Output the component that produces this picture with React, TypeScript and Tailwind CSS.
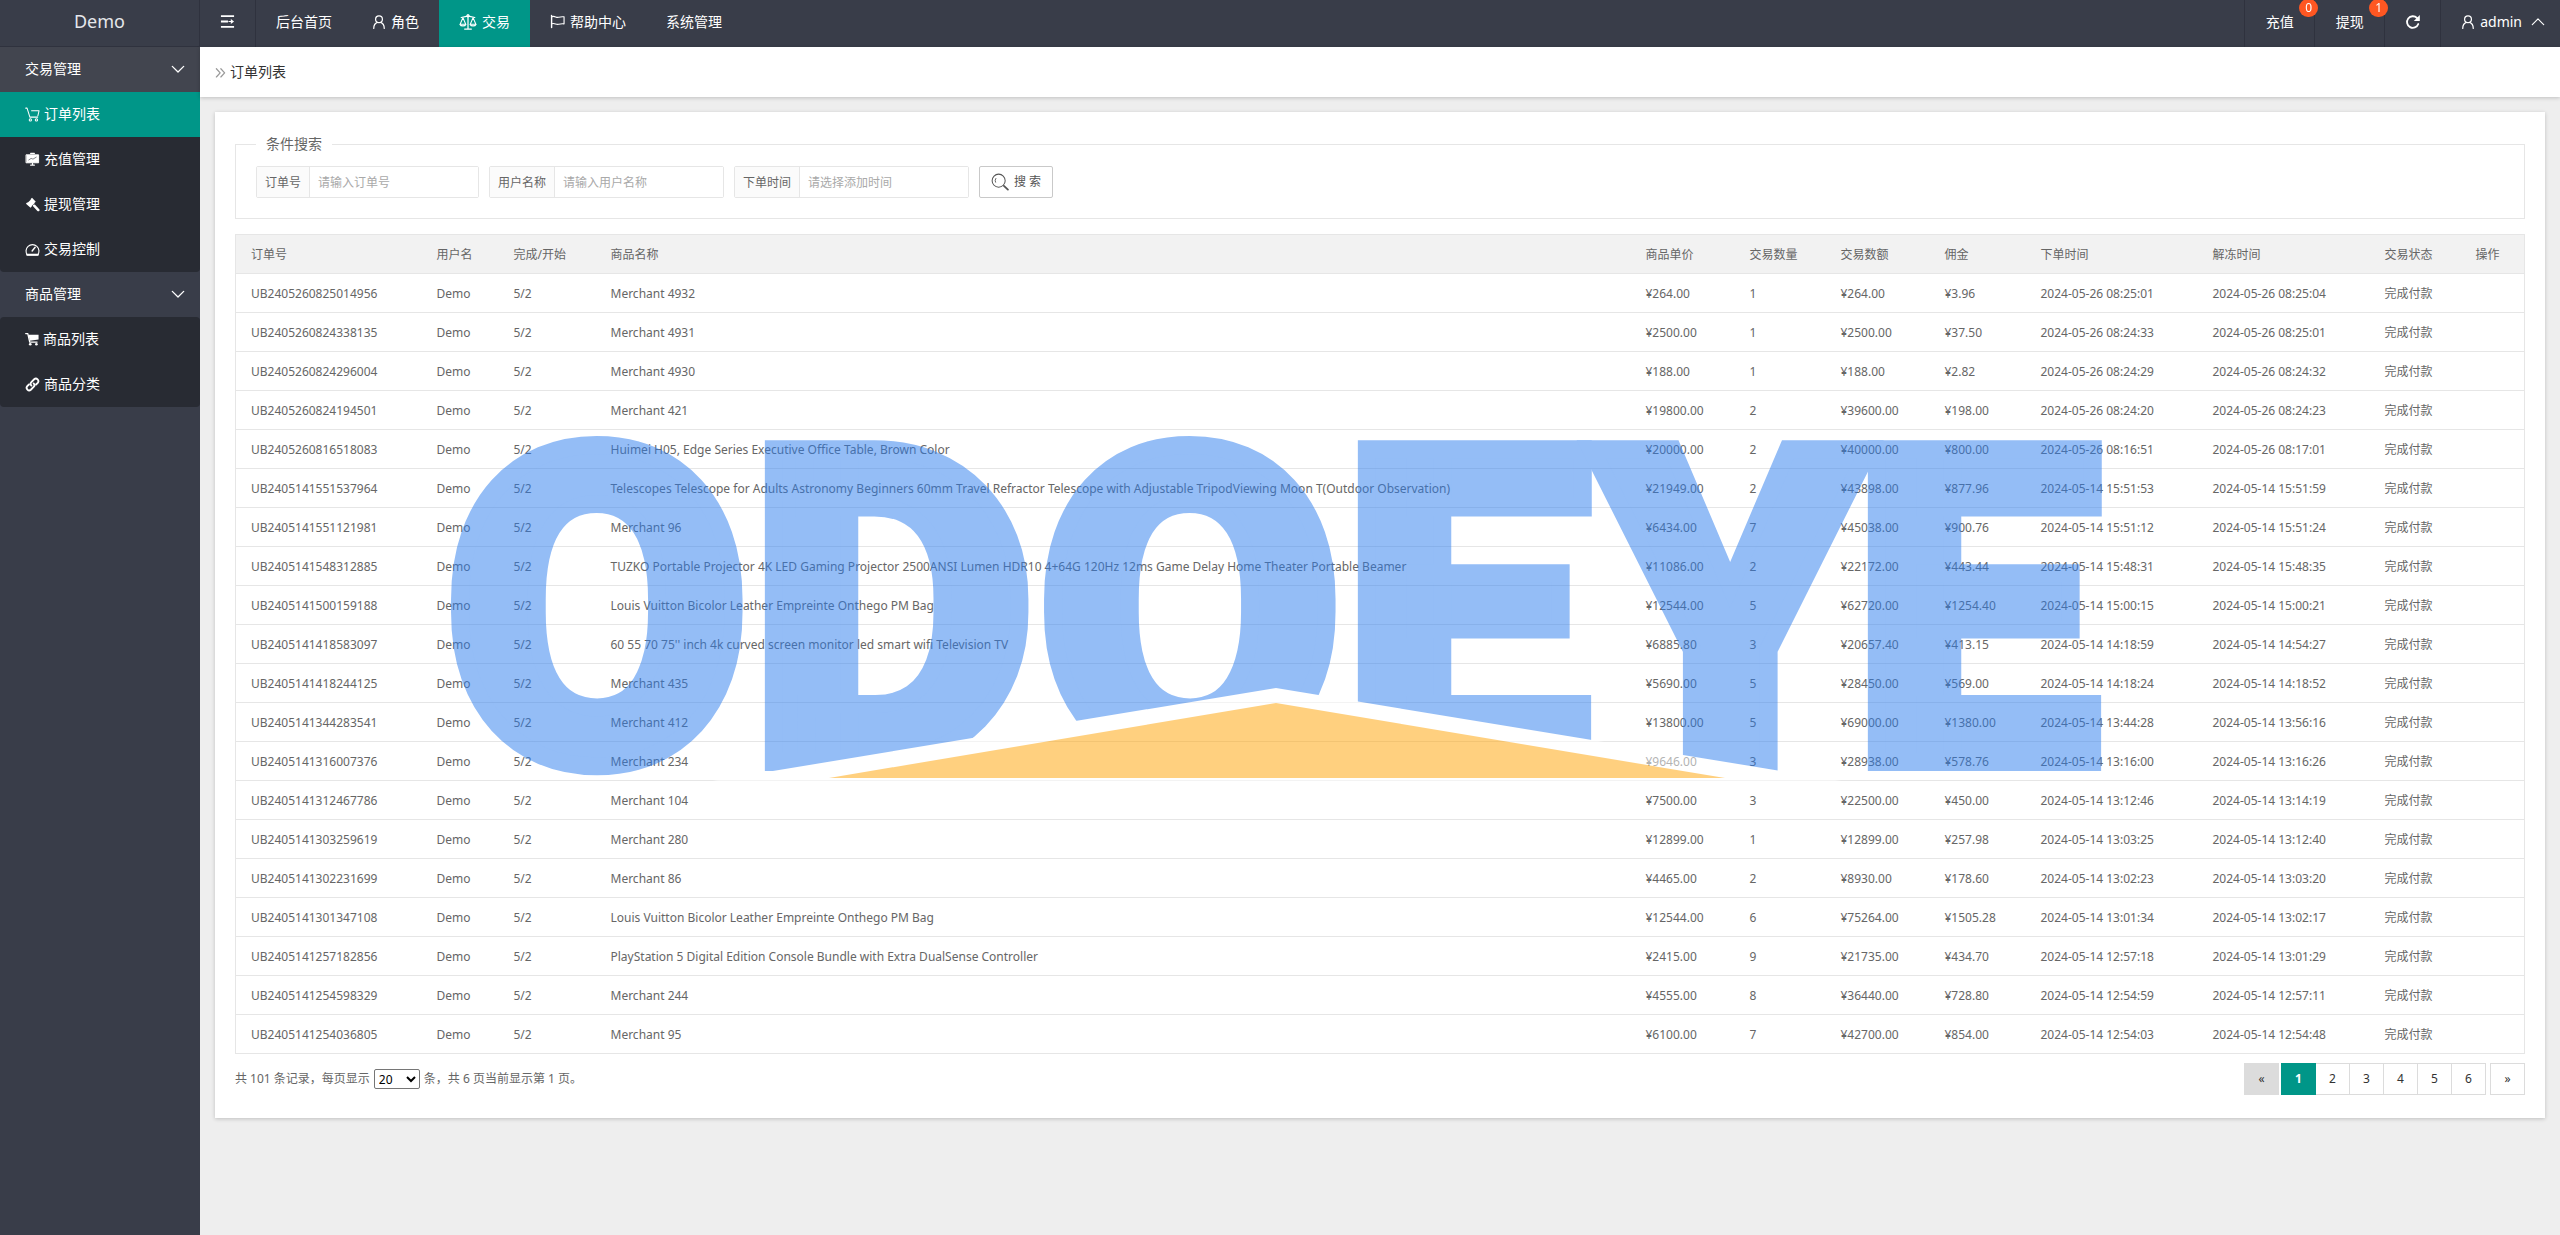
import { useState, type ReactNode } from "react";

function Icon({ size = 16, children }: { size?: number; children: ReactNode }) {
  return (
    <svg
      width={size}
      height={size}
      viewBox="0 0 16 16"
      fill="none"
      stroke="currentColor"
      strokeLinecap="round"
      strokeLinejoin="round"
      aria-hidden="true"
      className="shrink-0"
    >
      {children}
    </svg>
  );
}

const Shrink = () => (
  <Icon size={15}>
    <path d="M1 2.200h14M1 13.800h14M1 8h7.500" strokeWidth="1.900" strokeLinecap="butt" />
    <path d="M9.500 8h3" strokeWidth="1.200" />
    <path d="M11.500 5.300L15 8l-3.500 2.700z" fill="currentColor" stroke="none" />
  </Icon>
);

const Person = () => (
  <Icon size={14}>
    <circle cx="8" cy="4.800" r="3.900" strokeWidth="1.400" />
    <path d="M2 15.400c0-3.600 1.800-6.200 4.200-7M14 15.400c0-3.600-1.800-6.200-4.200-7" strokeWidth="1.400" />
  </Icon>
);

const Scales = () => (
  <Icon size={18}>
    <path d="M8 1.500v12.500M5 14.300h6M2 4l4.500-1h3L14 4" strokeWidth="1.100" />
    <path d="M3.500 4.200L1 10h5L3.500 4.200zM12.500 4.200L10 10h5l-2.500-5.800z" strokeWidth="0.900" />
    <path d="M1 10.200c.6 1.700 4.400 1.700 5 0M10 10.200c.6 1.700 4.400 1.700 5 0" strokeWidth="1.100" />
    <circle cx="8" cy="2.500" r="1" strokeWidth="1" />
  </Icon>
);

const Flag = () => (
  <Icon size={15}>
    <path d="M1.700 1.500v13" strokeWidth="1.500" />
    <path d="M2 3c3-1.600 4.500 1.300 7 .5 1.800-.5 3-.9 6-.5v7.500c-3-.4-4.200 0-6 .5-2.500.8-4-1.900-7-.5" strokeWidth="1.200" />
  </Icon>
);

const Reload = () => (
  <Icon size={16}>
    <path d="M13.300 10A5.800 5.800 0 1 1 12 4" strokeWidth="1.800" />
    <path d="M14.800 1v6H8.800z" fill="currentColor" stroke="none" />
  </Icon>
);

const CartLine = () => (
  <Icon size={15}>
    <path d="M.8 1.200h1.400l3 9.600h8.300" strokeWidth="1.100" />
    <path d="M7 4h8l-1.300 5.500" strokeWidth="1.100" />
    <circle cx="5.700" cy="13.800" r="1.200" strokeWidth="1.100" />
    <circle cx="12.200" cy="13.800" r="1.200" strokeWidth="1.100" />
  </Icon>
);

const Board = () => (
  <Icon size={15}>
    <path d="M1.500 3h13v8.500h-13z" fill="currentColor" strokeWidth="1" />
    <path d="M6 1.500h4M6 14h4M8 12v2" strokeWidth="1.200" />
    <path d="M4 8.500l2.500-1.700 2 .8L12 5.500" stroke="#282b33" strokeWidth="0.600" />
  </Icon>
);

const Gavel = () => (
  <Icon size={15}>
    <path d="M7.500.8l4 4.200-1.300 1.200 0 .4-3 3v.600l-1.300 1.300L1 7.200l1.200-1.300h.9l3-3V2z" fill="currentColor" stroke="none" />
    <path d="M9.800 9.300l4.400 4.600" strokeWidth="2.700" />
  </Icon>
);

const Gauge = () => (
  <Icon size={15}>
    <path d="M2.600 14a6.900 6.900 0 1 1 10.800 0z" strokeWidth="1.200" />
    <path d="M2.200 13.500h11.600" strokeWidth="2" />
    <path d="M7.600 9.600l3.200-4" strokeWidth="1.500" />
  </Icon>
);

const CartSolid = () => (
  <Icon size={14}>
    <path d="M4 3h11.500v5.500L5.500 10z" fill="currentColor" stroke="none" />
    <path d="M.8 1.800h2.400l2.200 9.700h8.400" strokeWidth="1.500" />
    <circle cx="6" cy="14" r="1.500" fill="currentColor" stroke="none" />
    <circle cx="13" cy="14" r="1.500" fill="currentColor" stroke="none" />
  </Icon>
);

const Chain = () => (
  <Icon size={15}>
    <path d="M6.800 9.200a2.700 2.700 0 0 1 0-3.800l3-3a2.700 2.700 0 0 1 3.800 3.800l-1.800 1.800" strokeWidth="2" />
    <path d="M9.200 6.800a2.700 2.700 0 0 1 0 3.800l-3 3a2.700 2.700 0 0 1-3.800-3.800l1.800-1.800" strokeWidth="2" />
  </Icon>
);

const Search = () => (
  <Icon size={18}>
    <circle cx="6.800" cy="6.800" r="5.800" strokeWidth="0.900" />
    <path d="M11.500 11.500l3.500 3.300" strokeWidth="1.600" />
    <path d="M4 8.200a3.200 3.200 0 0 1 .3-3.400" strokeWidth="0.800" />
  </Icon>
);

const DoubleChevron = () => (
  <Icon size={11}>
    <path d="M2 2.500L7.500 8.500 2 14.500M8.500 2.500L14 8.500 8.500 14.500" strokeWidth="1.800" />
  </Icon>
);

const ChevronDown = () => (
  <Icon size={14}>
    <path d="M1.500 5L8 11.500 14.500 5" strokeWidth="1.500" />
  </Icon>
);

const ChevronUp = () => (
  <Icon size={14}>
    <path d="M1.500 11L8 4.500 14.500 11" strokeWidth="1.300" />
  </Icon>
);

const topNav: { label: string; icon?: ReactNode; active?: boolean }[] = [
  { label: "后台首页" },
  { label: "角色", icon: <Person /> },
  { label: "交易", icon: <Scales />, active: true },
  { label: "帮助中心", icon: <Flag /> },
  { label: "系统管理" },
];

const sideNav: { title: string; open?: boolean; items: { label: string; icon: ReactNode; active?: boolean }[] }[] = [
  {
    title: "交易管理",
    open: true,
    items: [
      { label: "订单列表", icon: <CartLine />, active: true },
      { label: "充值管理", icon: <Board /> },
      { label: "提现管理", icon: <Gavel /> },
      { label: "交易控制", icon: <Gauge /> },
    ],
  },
  {
    title: "商品管理",
    items: [
      { label: "商品列表", icon: <CartSolid /> },
      { label: "商品分类", icon: <Chain /> },
    ],
  },
];

const columns: [string, string][] = [
  ["订单号", "w-[186px]"],
  ["用户名", "w-[77px]"],
  ["完成/开始", "w-[97px]"],
  ["商品名称", ""],
  ["商品单价", "w-[104px]"],
  ["交易数量", "w-[91px]"],
  ["交易数额", "w-[104px]"],
  ["佣金", "w-[96px]"],
  ["下单时间", "w-[172px]"],
  ["解冻时间", "w-[172px]"],
  ["交易状态", "w-[91px]"],
  ["操作", "w-16"],
];

const orders: string[][] = [
  ["UB2405260825014956", "Merchant 4932", "264.00", "1", "264.00", "3.96", "2024-05-26 08:25:01", "2024-05-26 08:25:04"],
  ["UB2405260824338135", "Merchant 4931", "2500.00", "1", "2500.00", "37.50", "2024-05-26 08:24:33", "2024-05-26 08:25:01"],
  ["UB2405260824296004", "Merchant 4930", "188.00", "1", "188.00", "2.82", "2024-05-26 08:24:29", "2024-05-26 08:24:32"],
  ["UB2405260824194501", "Merchant 421", "19800.00", "2", "39600.00", "198.00", "2024-05-26 08:24:20", "2024-05-26 08:24:23"],
  ["UB2405260816518083", "Huimei H05, Edge Series Executive Office Table, Brown Color", "20000.00", "2", "40000.00", "800.00", "2024-05-26 08:16:51", "2024-05-26 08:17:01"],
  ["UB2405141551537964", "Telescopes Telescope for Adults Astronomy Beginners 60mm Travel Refractor Telescope with Adjustable TripodViewing Moon T(Outdoor Observation)", "21949.00", "2", "43898.00", "877.96", "2024-05-14 15:51:53", "2024-05-14 15:51:59"],
  ["UB2405141551121981", "Merchant 96", "6434.00", "7", "45038.00", "900.76", "2024-05-14 15:51:12", "2024-05-14 15:51:24"],
  ["UB2405141548312885", "TUZKO Portable Projector 4K LED Gaming Projector 2500ANSI Lumen HDR10 4+64G 120Hz 12ms Game Delay Home Theater Portable Beamer", "11086.00", "2", "22172.00", "443.44", "2024-05-14 15:48:31", "2024-05-14 15:48:35"],
  ["UB2405141500159188", "Louis Vuitton Bicolor Leather Empreinte Onthego PM Bag", "12544.00", "5", "62720.00", "1254.40", "2024-05-14 15:00:15", "2024-05-14 15:00:21"],
  ["UB2405141418583097", "60 55 70 75'' inch 4k curved screen monitor led smart wifi Television TV", "6885.80", "3", "20657.40", "413.15", "2024-05-14 14:18:59", "2024-05-14 14:54:27"],
  ["UB2405141418244125", "Merchant 435", "5690.00", "5", "28450.00", "569.00", "2024-05-14 14:18:24", "2024-05-14 14:18:52"],
  ["UB2405141344283541", "Merchant 412", "13800.00", "5", "69000.00", "1380.00", "2024-05-14 13:44:28", "2024-05-14 13:56:16"],
  ["UB2405141316007376", "Merchant 234", "9646.00", "3", "28938.00", "578.76", "2024-05-14 13:16:00", "2024-05-14 13:16:26"],
  ["UB2405141312467786", "Merchant 104", "7500.00", "3", "22500.00", "450.00", "2024-05-14 13:12:46", "2024-05-14 13:14:19"],
  ["UB2405141303259619", "Merchant 280", "12899.00", "1", "12899.00", "257.98", "2024-05-14 13:03:25", "2024-05-14 13:12:40"],
  ["UB2405141302231699", "Merchant 86", "4465.00", "2", "8930.00", "178.60", "2024-05-14 13:02:23", "2024-05-14 13:03:20"],
  ["UB2405141301347108", "Louis Vuitton Bicolor Leather Empreinte Onthego PM Bag", "12544.00", "6", "75264.00", "1505.28", "2024-05-14 13:01:34", "2024-05-14 13:02:17"],
  ["UB2405141257182856", "PlayStation 5 Digital Edition Console Bundle with Extra DualSense Controller", "2415.00", "9", "21735.00", "434.70", "2024-05-14 12:57:18", "2024-05-14 13:01:29"],
  ["UB2405141254598329", "Merchant 244", "4555.00", "8", "36440.00", "728.80", "2024-05-14 12:54:59", "2024-05-14 12:57:11"],
  ["UB2405141254036805", "Merchant 95", "6100.00", "7", "42700.00", "854.00", "2024-05-14 12:54:03", "2024-05-14 12:54:48"],
];

const fields = [
  { id: "order", label: "订单号", hint: "请输入订单号" },
  { id: "user", label: "用户名称", hint: "请输入用户名称" },
  { id: "time", label: "下单时间", hint: "请选择添加时间" },
];

function Header() {
  return (
    <header className="flex h-[47px] bg-[#393d49] text-sm text-white">
      <a href="#" className="flex w-[200px] shrink-0 items-center justify-center border-r border-b border-[#2f323e] pb-1 text-lg text-gray-200">
        Demo
      </a>
      <button type="button" aria-label="收起菜单" className="flex w-14 items-center justify-center border-r border-[#2f323e] pb-1">
        <Shrink />
      </button>
      <nav className="flex">
        {topNav.map((n) => (
          <a
            key={n.label}
            href="#"
            className={n.active ? "flex items-center gap-[5px] bg-[#009688] px-5 pb-1" : "flex items-center gap-[5px] px-5 pb-1"}
          >
            {n.icon}
            {n.label}
          </a>
        ))}
      </nav>
      <div className="ml-auto flex">
        {[
          ["充值", "0"],
          ["提现", "1"],
        ].map(([label, count]) => (
          <a key={label} href="#" className="relative flex w-[70px] items-center justify-center border-l border-[#2f323e] pb-1">
            {label}
            <span className="absolute -top-px -right-1 z-10 flex h-[18px] w-[19px] items-center justify-center rounded-full bg-[#ff5722] text-xs">
              {count}
            </span>
          </a>
        ))}
        <button type="button" aria-label="刷新" className="flex w-14 items-center justify-center border-l border-[#2f323e] pb-1">
          <Reload />
        </button>
        <button type="button" className="flex items-center gap-[5px] border-l border-[#2f323e] pr-[15px] pl-5 pb-1">
          <Person />
          <span>admin</span>
          <span className="ml-1">
            <ChevronUp />
          </span>
        </button>
      </div>
    </header>
  );
}

function Sidebar() {
  return (
    <aside className="w-[200px] shrink-0 bg-[#393d49] text-sm text-white">
      {sideNav.map((g) => (
        <section key={g.title}>
          <button
            type="button"
            className={
              g.open
                ? "flex h-[45px] w-full items-center justify-between bg-[#42454f] pr-[15px] pb-px pl-[25px]"
                : "flex h-[45px] w-full items-center justify-between pr-[15px] pb-px pl-[25px]"
            }
          >
            {g.title}
            <ChevronDown />
          </button>
          <ul className="rounded-sm bg-[#282b33]">
            {g.items.map((i) => (
              <li key={i.label}>
                <a
                  href="#"
                  className={
                    i.active
                      ? "flex h-[45px] items-center gap-1 bg-[#009688] pb-px pl-[25px]"
                      : "flex h-[45px] items-center gap-1 pb-px pl-[25px]"
                  }
                >
                  {i.icon}
                  {i.label}
                </a>
              </li>
            ))}
          </ul>
        </section>
      ))}
    </aside>
  );
}

function Filters() {
  return (
    <fieldset className="h-[85px] border border-[#e6e6e6] px-5">
      <legend className="px-2.5 text-sm leading-5">条件搜索</legend>
      <form className="flex gap-2.5 pt-3" onSubmit={(e) => e.preventDefault()}>
        {fields.map((f) => (
          <div key={f.id} className="flex h-8 rounded-xs border border-[#e6e6e6]">
            <label htmlFor={f.id} className="flex items-center border-r border-[#e6e6e6] bg-[#fbfbfb] px-2 pt-px">
              {f.label}
            </label>
            <input
              id={f.id}
              type="text"
              placeholder={f.hint}
              className="w-[168px] bg-white px-2 pt-px outline-none placeholder:text-[#a9a9a9]"
            />
          </div>
        ))}
        <button type="submit" className="flex h-8 w-[74px] items-center justify-center gap-[5px] rounded-xs border border-[#c9c9c9] bg-white text-[#555]">
          <Search />
          <span>搜 索</span>
        </button>
      </form>
    </fieldset>
  );
}

function Orders() {
  return (
    <table className="mt-[15px] w-full table-fixed border-collapse border border-[#e6e6e6]">
      <thead>
        <tr className="h-[39px] border-b border-[#e6e6e6] bg-[#f2f2f2]">
          {columns.map(([name, width]) => (
            <th key={name} scope="col" className={`${width} pt-px pl-[15px] text-left font-normal whitespace-nowrap`}>
              {name}
            </th>
          ))}
        </tr>
      </thead>
      <tbody>
        {orders.map(([id, name, price, count, total, fee, created, released]) => (
          <tr key={id} className="h-[39px] border-b border-[#e6e6e6] whitespace-nowrap">
            {[id, "Demo", "5/2", name, "¥" + price, count, "¥" + total, "¥" + fee, created, released, "完成付款", ""].map((cell, k) => (
              <td key={k} className="pt-px pl-[15px]">
                {cell}
              </td>
            ))}
          </tr>
        ))}
      </tbody>
    </table>
  );
}

function Pager({ page, onPage }: { page: number; onPage: (n: number) => void }) {
  return (
    <div className="flex items-center justify-between pt-[9px]">
      <div className="flex items-center gap-1">
        <label htmlFor="size">共 101 条记录，每页显示</label>
        <select id="size" defaultValue="20" className="h-5 w-[46px] rounded-xs border border-[#767676] bg-white text-black">
          <option>20</option>
          <option>50</option>
          <option>100</option>
        </select>
        <span>条，共 6 页当前显示第 {page} 页。</span>
      </div>
      <nav aria-label="分页" className="flex h-8 text-[#333]">
        <button type="button" disabled className="mr-0.5 w-[35px] bg-[#dcdcdc]">
          «
        </button>
        {[1, 2, 3, 4, 5, 6].map((n) => (
          <button
            key={n}
            type="button"
            onClick={() => onPage(n)}
            className={n === page ? "w-[35px] bg-[#009688] font-bold text-white" : "w-[34px] border-y border-r border-[#dcdcdc] bg-white"}
          >
            {n}
          </button>
        ))}
        <button type="button" className="ml-1 w-[35px] border border-[#dcdcdc] bg-white">
          »
        </button>
      </nav>
    </div>
  );
}

function Watermark() {
  return (
    <svg viewBox="0 0 2560 1235" className="pointer-events-none fixed inset-0 h-full w-full opacity-50">
      <text
        x="445 750 1038 1343 1592 1853"
        y="762"
        fill="#2a7cee"
        stroke="#2a7cee"
        strokeWidth="18"
        className="font-['Roboto'] text-[440px] font-black"
      >
        ODOEYE
      </text>
      <path d="M688 785L1276 688l590 97z" fill="#fff" />
      <path d="M829 778l447-75 449 75z" fill="#ffa201" />
    </svg>
  );
}

export default function App() {
  const [page, setPage] = useState(1);
  return (
    <div className="flex min-h-screen flex-col bg-[#eee] font-['Noto_Sans','Noto_Sans_CJK_SC',sans-serif] text-xs text-[#666]">
      <Header />
      <div className="flex grow">
        <Sidebar />
        <main className="min-w-0 grow">
          <h1 className="flex h-[50px] items-center gap-1 bg-white px-[15px] text-sm text-[#333] shadow-[0_1px_4px_rgba(0,0,0,0.2)]">
            <span className="text-[#999]">
              <DoubleChevron />
            </span>
            订单列表
          </h1>
          <div className="m-[15px] bg-white px-5 pt-[22px] pb-[23px] shadow-[0_1px_4px_rgba(0,0,0,0.2)]">
            <Filters />
            <Orders />
            <Pager page={page} onPage={setPage} />
          </div>
        </main>
      </div>
      <Watermark />
    </div>
  );
}
